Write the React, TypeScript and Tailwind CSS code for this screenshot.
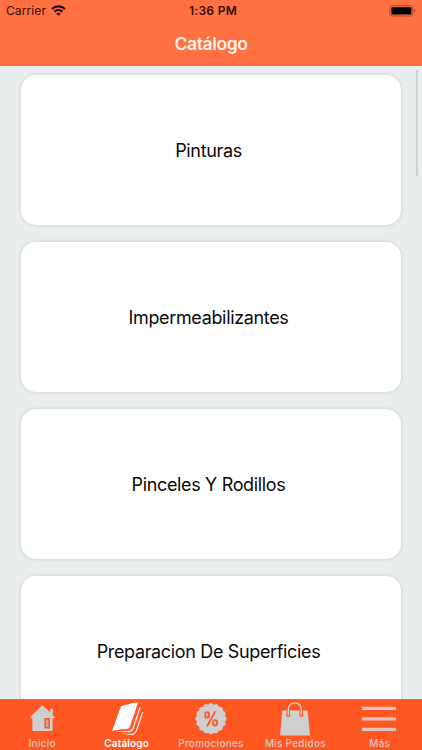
import React from 'react';

const categories = ['Pinturas', 'Impermeabilizantes', 'Pinceles Y Rodillos', 'Preparacion De Superficies'];

const HomeIcon = () => (
  <svg className="w-[34px] h-[36px]" viewBox="0 0 34 36" fill="none">
    <path d="M17.2 5.3 20.4 8 25.2 12.6V8.8h2.6v6.6l2.1 1.8-.8 1h-1.5v11.5c0 .8-.5 1.3-1.3 1.3H8.7c-.8 0-1.3-.5-1.3-1.3V18.2H5.6l-.8-1z" fill="#cfcfcf" />
    <path d="M20.2 18.8h4v8.9h-4z" fill="#cda493" stroke="#f9581f" strokeWidth="1.5" />
  </svg>
);

const CatalogIcon = () => (
  <svg className="w-[34px] h-[36px]" viewBox="0 0 34 36" fill="none">
    <path d="M11 6C15.4 5.4 21 3 27.4 2.6l.4.7L20.2 26c-.8 2.4-2 3.3-4.2 3.3-5.4-.1-9.200.300-14 2z" fill="#fff" />
    <path d="M29.5 7.200 30.7 7.400 24.300 26.800c-1.500 4.300-3.200 5.600-6.900 5.300-4.600-.4-8.700-.3-12.600-.3 4.300-.8 8.200-.9 12.200-.8 3.400.1 4.800-1 6.200-5z" fill="#fff" />
    <path d="M32.200 11.900 33.300 12.100 27.500 29.200c-1.500 4.300-3.200 6-6.500 5.700-3.600-.4-6.800-.9-10.400-1.500 3.700.1 6.800.4 10 .4 3.300 0 4.500-1.400 5.800-4.900z" fill="#fff" />
  </svg>
);

const PromoIcon = () => {
  const points = Array.from({ length: 128 }, (_, i) => {
    const a = (i / 128) * Math.PI * 2;
    const r = 14.2 + 1.4 * Math.abs(Math.cos(a * 8));
    return `${(17 + r * Math.sin(a)).toFixed(2)},${(18.7 - r * Math.cos(a)).toFixed(2)}`;
  }).join(' ');

  return (
    <svg className="w-[34px] h-[36px]" viewBox="0 0 34 36" fill="none">
      <polygon points={points} fill="#cfcfcf" />
      <g stroke="#ff5722" strokeWidth="1.8" strokeLinecap="round">
        <rect x="11.2" y="12.2" width="3.9" height="5.4" rx="1.9" />
        <rect x="19.2" y="20.1" width="3.9" height="5.4" rx="1.9" />
        <path d="M20.9 12 13.4 25.8" />
      </g>
    </svg>
  );
};

const BagIcon = () => (
  <svg className="w-[34px] h-[36px]" viewBox="0 0 34 36" fill="none">
    <path d="M4.4 10.5h25.2L32 35.6H2z" fill="#cfcfcf" />
    <path d="M10.3 15V9.5c0-8.600 13-8.600 13 0V15" stroke="#ff5722" strokeWidth="3.2" />
    <circle cx="10.3" cy="15" r="2.1" fill="#ff5722" />
    <circle cx="23.3" cy="15" r="2.1" fill="#ff5722" />
    <path d="M10.3 15V9.5c0-8.600 13-8.600 13 0V15" stroke="#cfcfcf" strokeWidth="1.5" strokeLinecap="round" />
  </svg>
);

const MenuIcon = () => (
  <svg className="w-[34px] h-[36px] mr-[2px]" viewBox="0 0 34 36">
    <path d="M0 6.7h34V10H0zM0 17.2h34v3.3H0zM0 27.7h34V31H0z" fill="#dcc5be" />
  </svg>
);

const tabs = [
  { label: 'Inicio', icon: <HomeIcon /> },
  { label: 'Catálogo', icon: <CatalogIcon />, active: true },
  { label: 'Promociones', icon: <PromoIcon /> },
  { label: 'Mis Pedidos', icon: <BagIcon /> },
  { label: 'Más', icon: <MenuIcon /> },
];

const StatusBar = () => (
  <div className="grid grid-cols-3 items-center h-[22px] px-1.5 text-[#301006]">
    <div className="flex items-center gap-[5px]">
      <span className="text-[12px] leading-[22px] tracking-[0.1px]">Carrier</span>
      <svg className="w-[15px] h-[11px] -mt-px" viewBox="0 0 15 11" fill="none" stroke="#1a0904">
        <path d="M1 4.1c3.7-3.7 9.3-3.7 13 0" strokeWidth="2.1" />
        <path d="M3.4 6.7c2.4-2.3 5.8-2.3 8.2 0" strokeWidth="1.9" />
        <path d="M5.2 8.5c1.4-1.2 3.2-1.2 4.6 0L7.5 10.8z" fill="#1a0904" stroke="none" />
      </svg>
    </div>
    <span className="pl-[4px] text-center text-[12px] font-semibold leading-[22px] tracking-[0.3px]">1:36 PM</span>
    <svg className="w-[27px] h-[12px] justify-self-end" viewBox="0 0 27 12">
      <rect x="0.9" y="0.8" width="23" height="10.2" rx="2.3" fill="none" stroke="#a94828" />
      <rect x="2.4" y="2.3" width="20" height="7.2" rx="1" fill="#000" />
      <path d="M25 4.3c1.8.4 1.8 2.8 0 3.2z" fill="#a94828" />
    </svg>
  </div>
);

const App = () => {
  return (
    <div className="flex flex-col w-[422px] h-[750px] overflow-hidden bg-[#eaeeef] font-['Inter','Liberation_Sans',sans-serif]">
      <header className="shrink-0 h-[66px] bg-[#ff7043]">
        <StatusBar />
        <h1 className="h-[44px] text-center text-[17.5px] font-semibold leading-[43px] tracking-[-0.4px] text-[#fff3ec]">Catálogo</h1>
      </header>

      <main className="relative flex-1 min-h-0 overflow-hidden px-[21px] pt-[9px]">
        <div className="flex flex-col gap-[17px]">
          {categories.map((name) => (
            <div
              key={name}
              className="flex shrink-0 items-center justify-center h-[150px] pt-px pr-[5px] rounded-[15px] bg-white shadow-[0_0_4px_rgba(0,0,0,0.14)]"
            >
              <span className="text-[18px] leading-6 tracking-[-0.35px] text-[#0a0a0a]">{name}</span>
            </div>
          ))}
        </div>
        <div className="absolute right-[4px] top-[4px] w-[2px] h-[106px] rounded-full bg-[#cdd1d2]" />
      </main>

      <nav className="grid shrink-0 grid-cols-5 h-[51px] border-t border-[#e9663e] bg-[#ff5722]">
        {tabs.map((tab) => (
          <div key={tab.label} className="flex flex-col items-center">
            {tab.icon}
            <span
              className={`text-[10px] leading-[14px] whitespace-nowrap ${tab.active ? 'font-semibold tracking-[0.15px] text-white' : 'font-medium tracking-[0.25px] text-[#dcc5be]'}`}
            >
              {tab.label}
            </span>
          </div>
        ))}
      </nav>
    </div>
  );
};

export default App;
